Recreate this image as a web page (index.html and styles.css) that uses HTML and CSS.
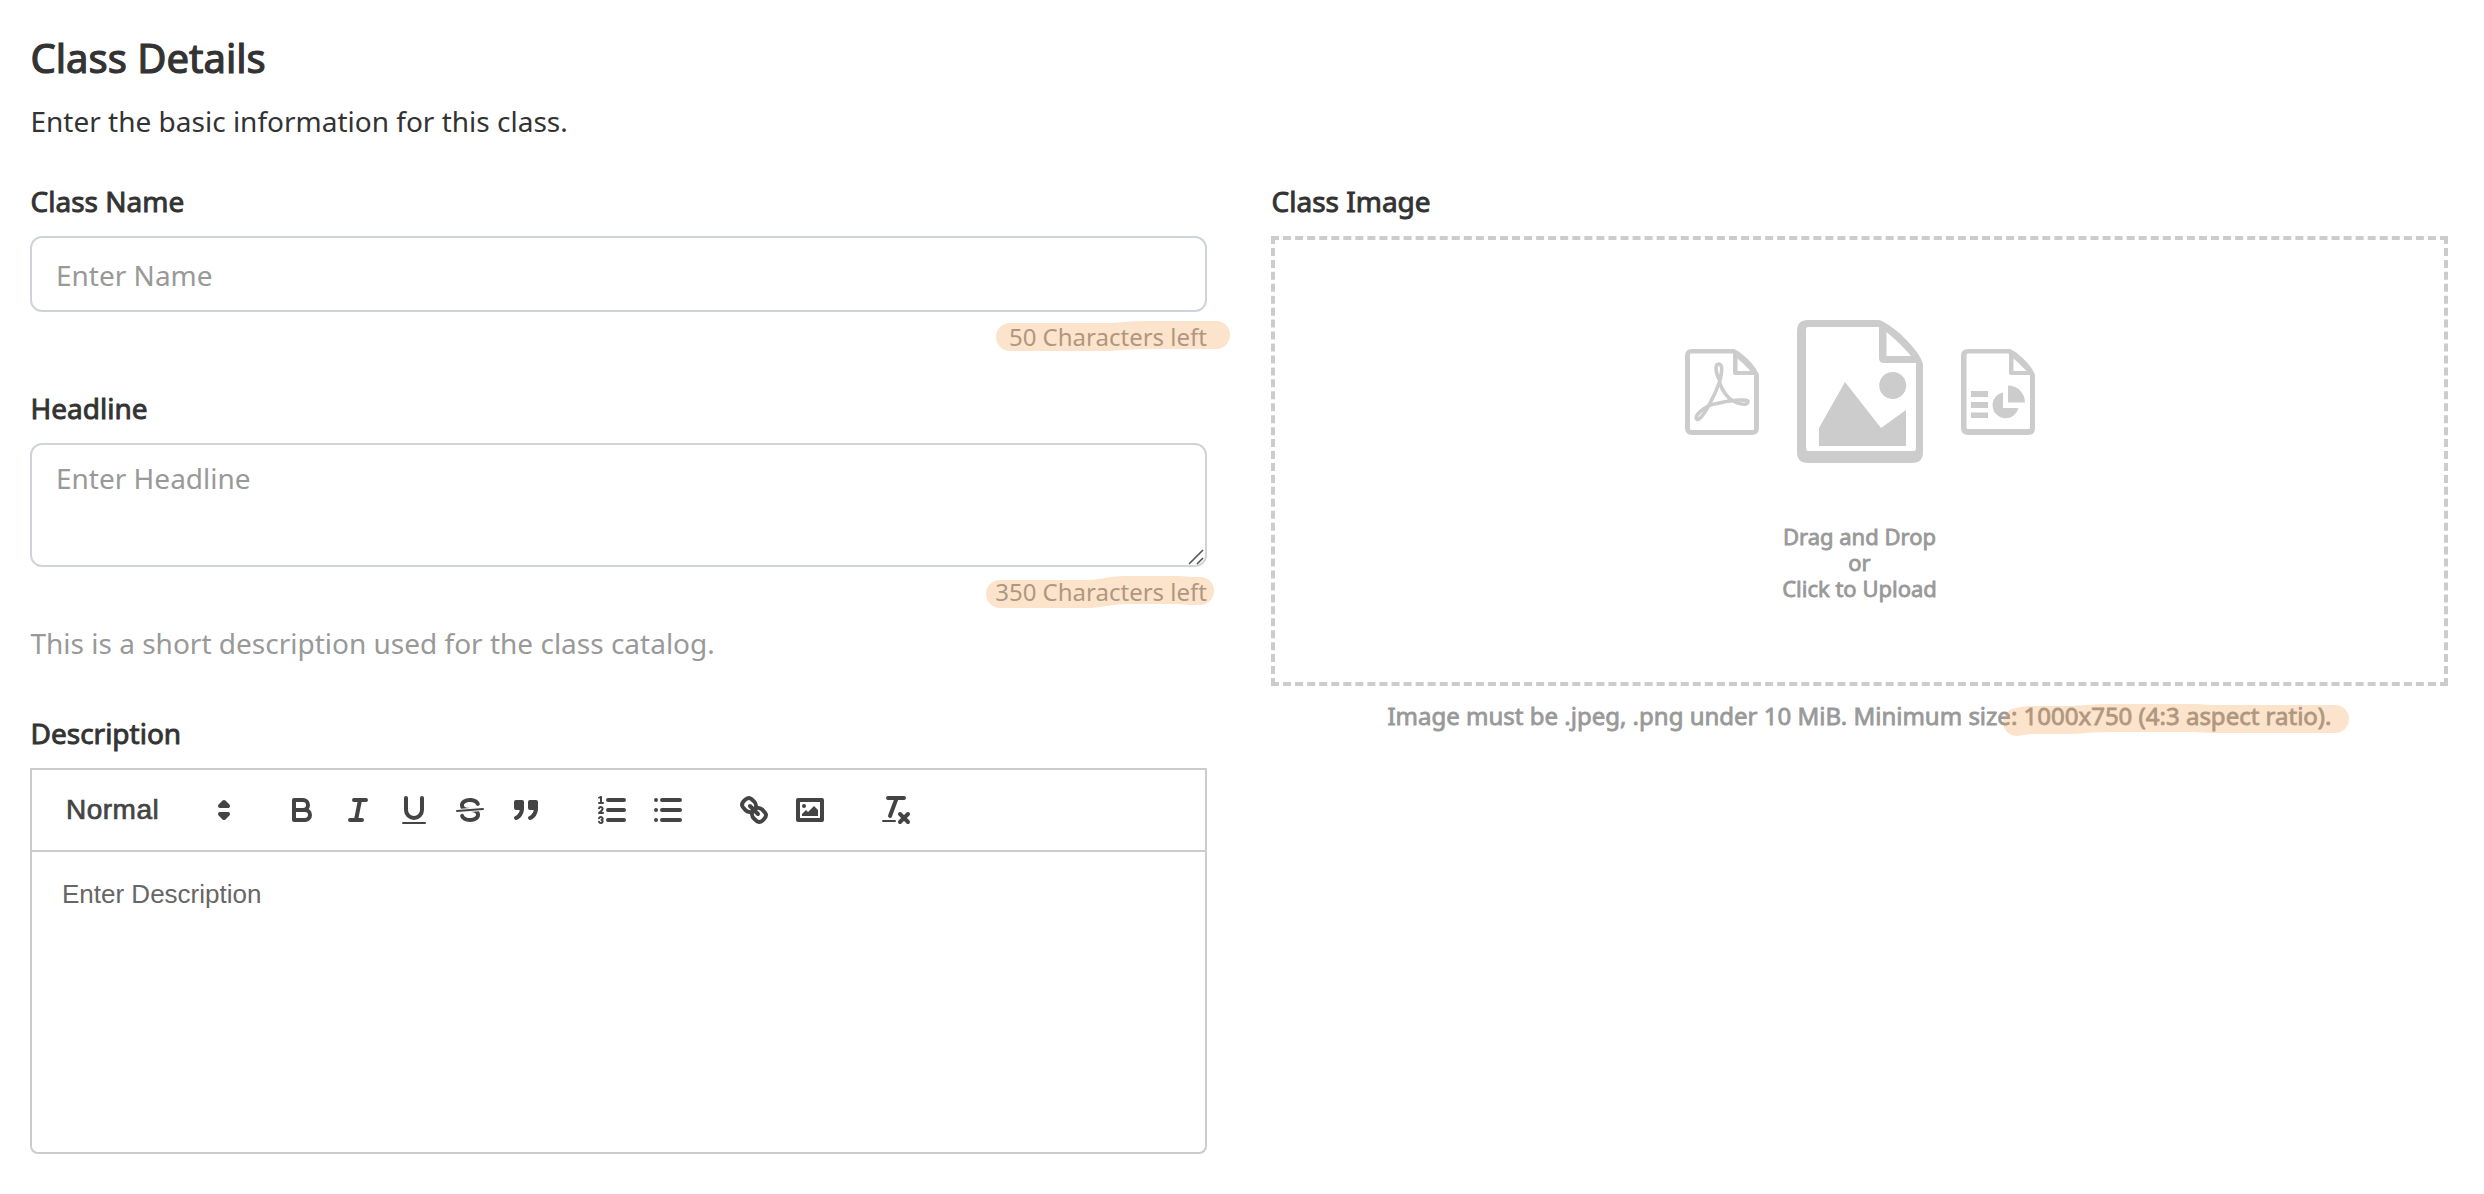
FILE: index.html
```html
<!DOCTYPE html>
<html lang="en">
<head>
<meta charset="utf-8">
<title>Class Details</title>
<link rel="stylesheet" href="styles.css">
</head>
<body>
<main class="page">
  <h1 class="title">Class Details</h1>
  <p class="subtitle">Enter the basic information for this class.</p>
  <div class="columns">
    <section class="column">
      <label class="label" for="name">Class Name</label>
      <input class="control input" id="name" type="text" placeholder="Enter Name">
      <div class="counter"><span class="marked">50 Characters left
        <svg class="marker marker-name" viewBox="0 0 240 40"><path d="M16 21H116C131 20 136 19 151 19H222"/></svg></span></div>

      <label class="label" for="headline">Headline</label>
      <div class="area-wrap">
        <textarea class="control area" id="headline" placeholder="Enter Headline"></textarea>
        <svg class="grip" viewBox="0 0 16 16"><path d="M1 15L15 1M9 15L15 9"/></svg>
      </div>
      <div class="counter"><span class="marked">350 Characters left
        <svg class="marker marker-headline" viewBox="0 0 240 40"><path d="M16 22H106C121 21 126 18 141 18H196Q201 19 216 19"/></svg></span></div>
      <p class="hint">This is a short description used for the class catalog.</p>

      <div class="label">Description</div>
      <div class="editor">
        <div class="toolbar">
          <div class="group">
            <div class="picker">Normal
              <svg class="icon" viewBox="0 0 18 18"><polygon class="st" points="7 11 9 13 11 11 7 11"/><polygon class="st" points="7 7 9 5 11 7 7 7"/></svg>
            </div>
          </div>
          <div class="group">
            <button class="tool" aria-label="Bold"><svg class="icon" viewBox="0 0 18 18"><path class="st" d="M5,4H9.5A2.5,2.5,0,0,1,12,6.5v0A2.5,2.5,0,0,1,9.5,9H5Z"/><path class="st" d="M5,9h5.5A2.5,2.5,0,0,1,13,11.5v0A2.5,2.5,0,0,1,10.5,14H5Z"/></svg></button>
            <button class="tool" aria-label="Italic"><svg class="icon" viewBox="0 0 18 18"><path class="st" d="M7 4H13M5 14H11M8 14L10 4"/></svg></button>
            <button class="tool" aria-label="Underline"><svg class="icon" viewBox="0 0 18 18"><path class="st" d="M5,3V9a4.012,4.012,0,0,0,4,4H9a4.012,4.012,0,0,0,4-4V3"/><rect class="fl" height="1" rx=".5" width="12" x="3" y="15"/></svg></button>
            <button class="tool" aria-label="Strike"><svg class="icon" viewBox="0 0 18 18"><path class="st thin" d="M15.5 8.5L2.5 9.5"/><path class="fl" d="M9.007,8C6.542,7.791,6,7.519,6,6.5,6,5.792,7.283,5,9,5c1.571,0,2.765.679,2.969,1.309a1,1,0,0,0,1.9-.617C13.356,4.106,11.354,3,9,3,6.2,3,4,4.538,4,6.5a3.2,3.2,0,0,0,.5,1.843Z"/><path class="fl" d="M8.984,10C11.457,10.208,12,10.479,12,11.5c0,0.708-1.283,1.5-3,1.5-1.571,0-2.765-.679-2.969-1.309a1,1,0,1,0-1.9.617C4.644,13.894,6.646,15,9,15c2.8,0,5-1.538,5-3.5a3.2,3.2,0,0,0-.5-1.843Z"/></svg></button>
            <button class="tool" aria-label="Quote"><svg class="icon" viewBox="0 0 18 18"><rect class="fl st-fill" height="3" width="3" x="4" y="5"/><rect class="fl st-fill" height="3" width="3" x="11" y="5"/><path class="fl st-fill" d="M7,8c0,4.031-3,5-3,5"/><path class="fl st-fill" d="M14,8c0,4.031-3,5-3,5"/></svg></button>
          </div>
          <div class="group">
            <button class="tool" aria-label="Ordered list"><svg class="icon" viewBox="0 0 18 18"><path class="st" d="M7 4H15M7 9H15M7 14H15"/><path class="st thin" d="M2.5 5.5H4.5"/><path class="fl" d="M3.5,6A0.5,0.5,0,0,1,3,5.5V3.085l-0.276.138A0.5,0.5,0,0,1,2.053,3c-0.124-.247-0.023-0.324.224-0.447l1-.5A0.5,0.5,0,0,1,4,2.5v3A0.5,0.5,0,0,1,3.5,6Z"/><path class="st thin" d="M4.5,10.5h-2c0-.234,1.85-1.076,1.85-2.234A0.959,0.959,0,0,0,2.5,8.156"/><path class="st thin" d="M2.5,14.846a0.959,0.959,0,0,0,1.85-.109A0.7,0.7,0,0,0,3.75,14a0.688,0.688,0,0,0,.6-0.736,0.959,0.959,0,0,0-1.85-.109"/></svg></button>
            <button class="tool" aria-label="Bullet list"><svg class="icon" viewBox="0 0 18 18"><path class="st" d="M6 4H15M6 9H15M6 14H15M3 4H3M3 9H3M3 14H3"/></svg></button>
          </div>
          <div class="group">
            <button class="tool" aria-label="Link"><svg class="icon" viewBox="0 0 18 18"><path class="st" d="M7 7L11 11"/><path class="st" d="M8.9,4.577a3.476,3.476,0,0,1,.36,4.679A3.476,3.476,0,0,1,4.577,8.9C3.185,7.5,2.035,6.4,4.217,4.217S7.5,3.185,8.9,4.577Z"/><path class="st" d="M13.423,9.1a3.476,3.476,0,0,0-4.679-.36,3.476,3.476,0,0,0,.36,4.679c1.392,1.392,2.5,2.542,4.679.36S14.815,10.5,13.423,9.1Z"/></svg></button>
            <button class="tool" aria-label="Image"><svg class="icon" viewBox="0 0 18 18"><rect class="st" height="10" width="12" x="3" y="4"/><circle class="fl" cx="6" cy="7" r="1"/><polygon class="fl" points="5 12 5 11 7 9 8 10 11 7 13 9 13 12"/></svg></button>
          </div>
          <div class="group">
            <button class="tool" aria-label="Clear formatting"><svg class="icon" viewBox="0 0 18 18"><path class="st" d="M5 3H13M6 12L9.35 3M11 11L15 15M15 11L11 15"/><rect class="fl" height="1" rx=".5" width="7" x="2" y="14"/></svg></button>
          </div>
        </div>
        <div class="body">Enter Description</div>
      </div>
    </section>

    <section class="column">
      <div class="label">Class Image</div>
      <div class="dropzone">
        <div class="files">
          <svg class="file" viewBox="0 0 74 86"><path class="page-shape" fill-rule="evenodd" d="M7 0H49C57 3 72 18 74 26V79Q74 86 67 86H7Q0 86 0 79V7Q0 0 7 0ZM6 4.500Q5 4.500 5 5.500V80Q5 81 6 81H68Q69 81 69 80V26H50Q48 26 48 24V4.500ZM52.500 9.500V22H65.500Q59 15 52.500 9.500Z"/><path class="pdf" d="M34 30C30 22 30 15 34 15C38 15 37 24 34.500 33C30 46 18 70 12.500 70.500C7 68 20 56 32 54.500C44 51 60 50 63 52C63 59 48 53 44 49C38 43 35 37 34 30Z"/></svg>
          <svg class="file file-main" viewBox="0 0 126 143"><path class="page-shape" fill-rule="evenodd" d="M11 0H82C94 3 123 30 126 44V132Q126 143 115 143H11Q0 143 0 132V11Q0 0 11 0ZM11 7Q9 7 9 10V128Q9 131 11 131H117Q119 131 119 128V43H87Q82 43 82 38V7ZM89.500 12V36H114Q104 24 89.500 12Z"/><path class="page-shape" d="M22 108L48 62L84 108L109 90V126H22Z"/><circle class="page-shape" cx="95.700" cy="65.500" r="13.500"/></svg>
          <svg class="file" viewBox="0 0 74 86"><path class="page-shape" fill-rule="evenodd" d="M7 0H49C57 3 72 18 74 26V79Q74 86 67 86H7Q0 86 0 79V7Q0 0 7 0ZM7 4.500Q5.500 4.500 5.500 6V79Q5.500 80 7 80H68Q69 80 69 79V26H50Q48 26 48 24V4.500ZM52.500 9.500V22H65.500Q59 15 52.500 9.500Z"/><path class="page-shape" d="M10 42H27V48H10ZM10 53H27V59H10ZM10 63.500H27V69H10ZM47 36.500A17 17 0 0 1 64 53.500H47ZM42 43.500V59H57.300A13 13 0 1 1 42 43.500Z"/></svg>
        </div>
        <p class="drop-text">Drag and Drop<br>or<br>Click to Upload</p>
      </div>
      <p class="rules"><span class="marked">Image must be .jpeg, .png under 10 MiB. Minimum size: 1000x750 (4:3 aspect ratio).
        <svg class="marker marker-rules" viewBox="0 0 360 40"><path d="M16 22L27 20H65C80 20 90 18 110 18H195Q205 19 215 19H334"/></svg></span></p>
    </section>
  </div>
</main>
</body>
</html>
```
FILE: styles.css
```css
* { box-sizing: border-box; }
body {
  margin: 0;
  background: #fff;
  color: #333;
  font-family: "Noto Sans", sans-serif;
  font-size: 28px;
  line-height: 40px;
}
h1, p { margin: 0; }
.page { padding: 31px 36px 0 30px; }
.title {
  font-size: 40px;
  font-weight: 400;
  line-height: 54px;
  -webkit-text-stroke: 1.2px currentColor;
}
.subtitle { margin-top: 16px; }
.columns {
  display: grid;
  grid-template-columns: 1177px 1177px;
  column-gap: 64px;
  margin-top: 40px;
}
.column { display: flex; flex-direction: column; }
.label {
  margin-bottom: 15px;
  -webkit-text-stroke: 0.9px currentColor;
}
.title, .subtitle, .label, .hint { text-indent: 0.5px; }
.control {
  display: block;
  width: 100%;
  border: 2px solid #ced4da;
  border-radius: 12px;
  background: transparent;
  font: inherit;
  color: #333;
  outline: none;
  resize: none;
  overflow: hidden;
}
.control::placeholder { color: #999; opacity: 1; }
.input { height: 76px; padding: 2px 24px 0; }
.area { height: 124px; padding: 13px 24px; }
.area-wrap { position: relative; }
.grip {
  position: absolute;
  right: 3px;
  bottom: 2px;
  width: 16px;
  height: 16px;
  fill: none;
  stroke: #555;
  stroke-width: 1.6;
}
.counter {
  margin: 9px 0 35px;
  text-align: right;
  font-size: 24px;
  line-height: 32px;
  color: #999;
}
.area-wrap + .counter { margin-bottom: 15px; }
.marked { position: relative; display: inline-block; }
.marker {
  position: absolute;
  height: 40px;
  fill: none;
  stroke: rgba(243, 147, 51, 0.25);
  stroke-width: 28;
  stroke-linecap: round;
  stroke-linejoin: round;
}
.marker-name { width: 240px; right: -27px; top: -5px; }
.marker-headline { width: 240px; right: -17px; top: -4px; }
.marker-rules { width: 360px; right: -29px; top: 1px; }
.hint { margin-bottom: 50px; color: #999; }
.editor {
  height: 386px;
  border: 2px solid #ccc;
  border-radius: 0 0 8px 8px;
  font-family: "Liberation Sans", Arial, sans-serif;
}
.toolbar {
  display: flex;
  gap: 30px;
  padding: 16px;
  border-bottom: 2px solid #ccc;
}
.group { display: flex; }
.picker {
  display: flex;
  justify-content: space-between;
  align-items: center;
  width: 196px;
  height: 48px;
  padding: 0 2px 0 18px;
  color: #444;
  letter-spacing: 0.5px;
  -webkit-text-stroke: 0.7px currentColor;
}
.tool {
  width: 56px;
  height: 48px;
  padding: 6px 10px;
  border: 0;
  background: none;
}
.icon { display: block; width: 36px; height: 36px; }
.st, .st-fill {
  stroke: #444;
  stroke-width: 2;
  stroke-linecap: round;
  stroke-linejoin: round;
}
.st { fill: none; }
.picker .st, .fl { fill: #444; }
.thin { stroke-width: 1; }
.body {
  padding: 24px 30px;
  font-size: 26px;
  line-height: 37px;
  color: #666;
}
.dropzone {
  display: flex;
  flex-direction: column;
  align-items: center;
  height: 450px;
  padding-top: 80px;
  border: 4px dashed #ccc;
}
.files { display: flex; align-items: center; gap: 38px; }
.file { width: 74px; height: 86px; }
.file-main { width: 126px; height: 143px; }
.page-shape { fill: #ccc; }
.pdf { fill: none; stroke: #ccc; stroke-width: 3.6; stroke-linejoin: round; }
.drop-text {
  margin-top: 60px;
  text-align: center;
  font-size: 22px;
  line-height: 26px;
  color: #999;
  -webkit-text-stroke: 0.8px currentColor;
}
.rules {
  margin-top: 13px;
  text-align: center;
  font-size: 24px;
  line-height: 34px;
  color: #999;
  -webkit-text-stroke: 0.8px currentColor;
}
```
